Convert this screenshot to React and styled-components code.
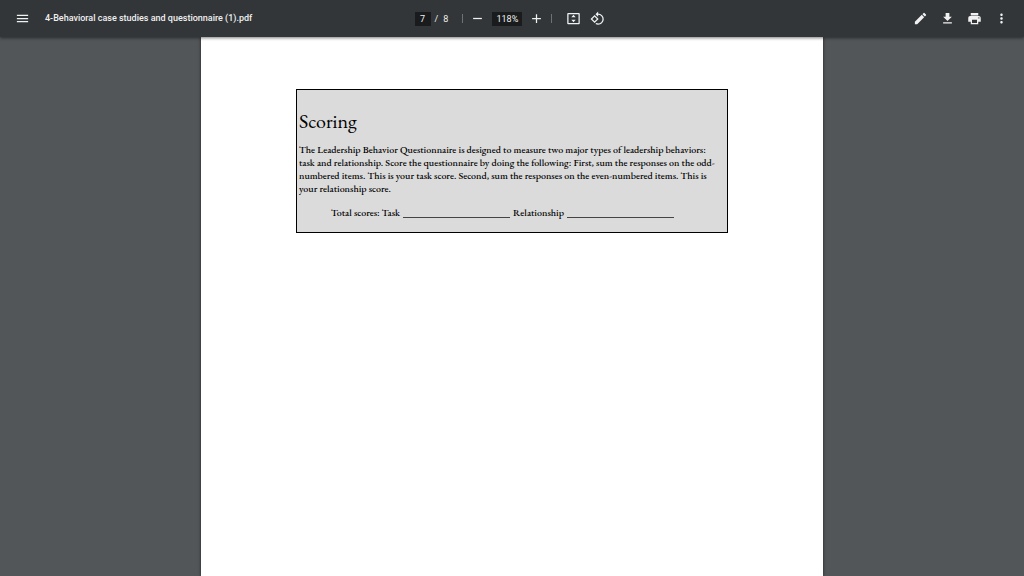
import React from "react";
import styled, { createGlobalStyle } from "styled-components";
import {
  MdMenu,
  MdRemove,
  MdAdd,
  MdRotate90DegreesCcw,
  MdEdit,
  MdDownload,
  MdPrint,
  MdMoreVert,
} from "react-icons/md";

const GlobalStyle = createGlobalStyle`
  * { box-sizing: border-box; }
  body {
    margin: 0;
    background: #525659;
    font-family: Roboto, "Liberation Sans", sans-serif;
  }
`;

const Viewer = styled.div`
  display: flex;
  flex-direction: column;
  min-height: 100vh;
`;

const Toolbar = styled.header`
  position: relative;
  z-index: 1;
  display: flex;
  align-items: center;
  height: 37px;
  padding: 0 15px;
  background: #323639;
  color: #f1f1f1;
  box-shadow: 0 1px 3px rgba(0, 0, 0, 0.5);
`;

const Side = styled.div`
  display: flex;
  flex: 1;
  align-items: center;
  justify-content: ${(p) => (p.$end ? "flex-end" : "flex-start")};
  gap: ${(p) => (p.$end ? "12px" : "15px")};
`;

const Center = styled.div`
  display: flex;
  align-items: center;
  gap: 14px;
  margin-right: 4px;
`;

const ControlGroup = styled.div`
  display: flex;
  align-items: center;
  gap: ${(p) => p.$gap};
`;

const IconButton = styled.button`
  display: flex;
  align-items: center;
  justify-content: center;
  width: 15px;
  height: 15px;
  padding: 0;
  border: 0;
  background: none;
  color: inherit;

  svg {
    width: 15px;
    height: 15px;
  }
`;

const FileName = styled.h1`
  margin: 0;
  font-size: 9px;
  font-weight: 500;
  line-height: 15px;
  white-space: nowrap;
`;

const PageSelector = styled.label`
  display: flex;
  align-items: center;
  gap: 4px;
  font-size: 9px;
`;

const Field = styled.input`
  width: ${(p) => p.$width};
  height: 14px;
  padding: 0;
  border: 0;
  background: #191b1c;
  color: #f1f1f1;
  font-family: inherit;
  font-size: 9px;
  text-align: center;
`;

const PageCount = styled.span`
  display: flex;
  gap: 5px;
`;

const Divider = styled.span`
  width: 1px;
  height: 9px;
  background: #6f7274;
`;

const Page = styled.main`
  flex: 1;
  width: 100%;
  max-width: 622px;
  margin: 0 auto;
  padding: 52px 95px;
  background: #fff;
  box-shadow: 0 0 3px rgba(0, 0, 0, 0.6);
`;

const ScoringBox = styled.section`
  padding: 19px 2px 12px;
  border: 1px solid #000;
  background: #dbdbdb;
  color: #000;
  font-family: "EB Garamond", "Liberation Serif", serif;
`;

const Heading = styled.h2`
  margin: 0;
  font-size: 20px;
  font-weight: 400;
  line-height: 24px;
`;

const Text = styled.p`
  margin: 10px 0 0;
  font-size: 10px;
  font-weight: 500;
  line-height: 13px;
  white-space: nowrap;
`;

const Scores = styled.div`
  display: flex;
  gap: 3px;
  margin-top: 11px;
  padding-left: 32px;
  font-size: 10px;
  font-weight: 500;
  line-height: 14px;
`;

const Blank = styled.span`
  width: 107px;
  height: 12px;
  border-bottom: 1px solid #444;
`;

const FitPageIcon = () => (
  <svg viewBox="0 0 24 24" fill="currentColor" aria-hidden="true">
    <path
      fillRule="evenodd"
      d="M3.500 3h17A1.500 1.500 0 0 1 22 4.500v15a1.500 1.500 0 0 1-1.500 1.500h-17A1.500 1.500 0 0 1 2 19.500v-15A1.500 1.500 0 0 1 3.500 3zM4 5v14h16V5H4z"
    />
    <path d="M12 6l3.500 4h-7zM12 18l3.500-4h-7z" />
  </svg>
);

export default function App() {
  return (
    <>
      <GlobalStyle />
      <Viewer>
        <Toolbar>
          <Side>
            <IconButton aria-label="Menu"><MdMenu /></IconButton>
            <FileName>4-Behavioral case studies and questionnaire (1).pdf</FileName>
          </Side>
          <Center>
            <PageSelector>
              <Field $width="16px" aria-label="Page number" defaultValue="7" />
              <PageCount>
                <span>/</span>
                <span>8</span>
              </PageCount>
            </PageSelector>
            <ControlGroup $gap="7px">
              <Divider />
              <IconButton aria-label="Zoom out"><MdRemove /></IconButton>
              <Field $width="30px" aria-label="Zoom level" defaultValue="118%" />
              <IconButton aria-label="Zoom in"><MdAdd /></IconButton>
              <Divider />
            </ControlGroup>
            <ControlGroup $gap="9px">
              <IconButton aria-label="Fit to page"><FitPageIcon /></IconButton>
              <IconButton aria-label="Rotate counterclockwise"><MdRotate90DegreesCcw /></IconButton>
            </ControlGroup>
          </Center>
          <Side $end>
            <IconButton aria-label="Annotate"><MdEdit /></IconButton>
            <IconButton aria-label="Download"><MdDownload /></IconButton>
            <IconButton aria-label="Print"><MdPrint /></IconButton>
            <IconButton aria-label="More actions"><MdMoreVert /></IconButton>
          </Side>
        </Toolbar>
        <Page>
          <ScoringBox>
            <Heading>Scoring</Heading>
            <Text>
              The Leadership Behavior Questionnaire is designed to measure two major types of leadership behaviors:
              <br />
              task and relationship. Score the questionnaire by doing the following: First, sum the responses on the odd-
              <br />
              numbered items. This is your task score. Second, sum the responses on the even-numbered items. This is
              <br />
              your relationship score.
            </Text>
            <Scores>
              <span>Total scores: Task</span>
              <Blank />
              <span>Relationship</span>
              <Blank />
            </Scores>
          </ScoringBox>
        </Page>
      </Viewer>
    </>
  );
}
